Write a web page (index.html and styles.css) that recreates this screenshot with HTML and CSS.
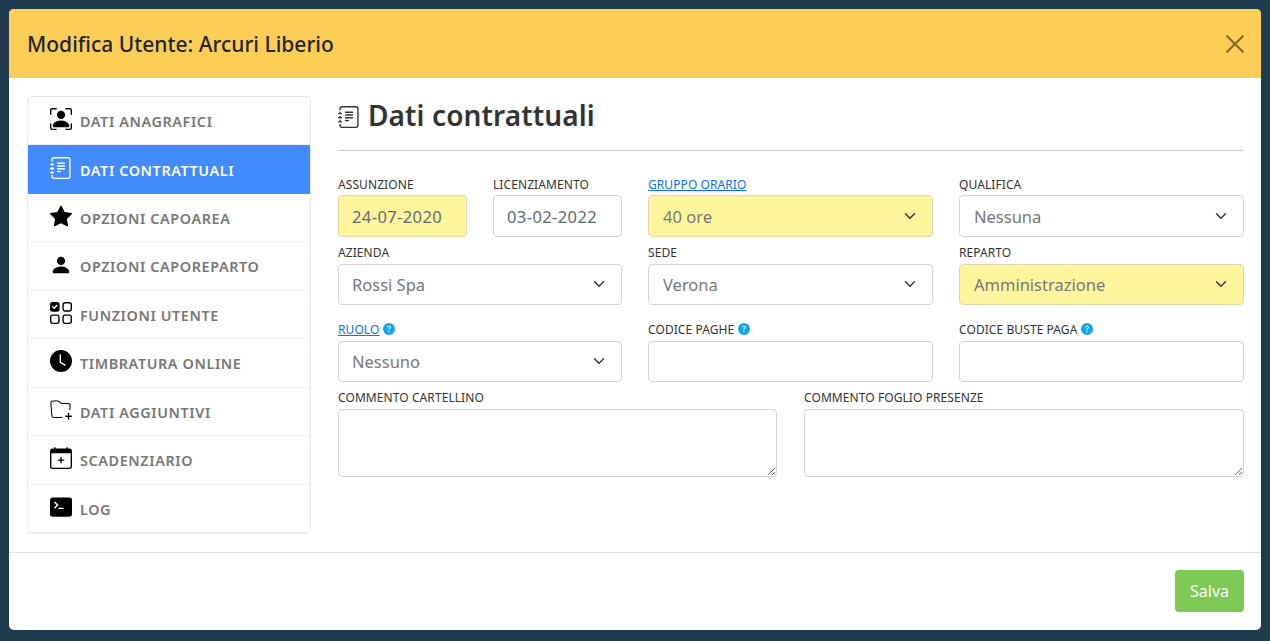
FILE: index.html
```html
<!DOCTYPE html>
<html lang="it">
<head>
<meta charset="utf-8">
<title>Modifica Utente</title>
<link rel="stylesheet" href="styles.css">
</head>
<body>
<div class="modal">
  <header class="modal-header">
    <h5 class="modal-title">Modifica Utente: Arcuri Liberio</h5>
    <button class="close" aria-label="Chiudi"><svg viewBox="0 0 18 18" width="18" height="18"><path d="M0.5 0.5L17.5 17.5M17.5 0.5L0.5 17.5"/></svg></button>
  </header>
  <div class="modal-body">
    <nav class="side">
      <a class="item"><svg class="ico" viewBox="0 0 16 16"><path d="M1.5 1a.5.5 0 0 0-.5.5v3a.5.5 0 0 1-1 0v-3A1.5 1.5 0 0 1 1.5 0h3a.5.5 0 0 1 0 1h-3zM11 .5a.5.5 0 0 1 .5-.5h3A1.5 1.5 0 0 1 16 1.5v3a.5.5 0 0 1-1 0v-3a.5.5 0 0 0-.5-.5h-3a.5.5 0 0 1-.5-.5zM.5 11a.5.5 0 0 1 .5.5v3a.5.5 0 0 0 .5.5h3a.5.5 0 0 1 0 1h-3A1.5 1.5 0 0 1 0 14.5v-3a.5.5 0 0 1 .5-.5zm15 0a.5.5 0 0 1 .5.5v3a1.5 1.5 0 0 1-1.5 1.5h-3a.5.5 0 0 1 0-1h3a.5.5 0 0 0 .5-.5v-3a.5.5 0 0 1 .5-.5z"/><path d="M3 14s-1 0-1-1 1-4 6-4 6 3 6 4-1 1-1 1H3zm8-9a3 3 0 1 1-6 0 3 3 0 0 1 6 0z"/></svg><span>DATI ANAGRAFICI</span></a>
      <a class="item active"><svg class="ico" viewBox="0 0 16 16"><path d="M5 10.5a.5.5 0 0 1 .5-.5h2a.5.5 0 0 1 0 1h-2a.5.5 0 0 1-.5-.5zm0-2a.5.5 0 0 1 .5-.5h5a.5.5 0 0 1 0 1h-5a.5.5 0 0 1-.5-.5zm0-2a.5.5 0 0 1 .5-.5h5a.5.5 0 0 1 0 1h-5a.5.5 0 0 1-.5-.5zm0-2a.5.5 0 0 1 .5-.5h5a.5.5 0 0 1 0 1h-5a.5.5 0 0 1-.5-.5z"/><path d="M3 0h10a2 2 0 0 1 2 2v12a2 2 0 0 1-2 2H3a2 2 0 0 1-2-2v-1h1v1a1 1 0 0 0 1 1h10a1 1 0 0 0 1-1V2a1 1 0 0 0-1-1H3a1 1 0 0 0-1 1v1H1V2a2 2 0 0 1 2-2z"/><path d="M1 5v-.5a.5.5 0 0 1 1 0V5h.5a.5.5 0 0 1 0 1h-2a.5.5 0 0 1 0-1H1zm0 3v-.5a.5.5 0 0 1 1 0V8h.5a.5.5 0 0 1 0 1h-2a.5.5 0 0 1 0-1H1zm0 3v-.5a.5.5 0 0 1 1 0v.5h.5a.5.5 0 0 1 0 1h-2a.5.5 0 0 1 0-1H1z"/></svg><span>DATI CONTRATTUALI</span></a>
      <a class="item"><svg class="ico" viewBox="0 0 16 16"><path d="M3.612 15.443c-.386.198-.824-.149-.746-.592l.83-4.73L.173 6.765c-.329-.314-.158-.888.283-.95l4.898-.696L7.538.792c.197-.39.73-.39.927 0l2.184 4.327 4.898.696c.441.062.612.636.282.95l-3.522 3.356.83 4.73c.078.443-.36.79-.746.592L8 13.187l-4.389 2.256z"/></svg><span>OPZIONI CAPOAREA</span></a>
      <a class="item"><svg class="ico" viewBox="0 0 16 16"><path d="M3 14s-1 0-1-1 1-4 6-4 6 3 6 4-1 1-1 1H3zm5-6a3 3 0 1 0 0-6 3 3 0 0 0 0 6z"/></svg><span>OPZIONI CAPOREPARTO</span></a>
      <a class="item"><svg class="ico" viewBox="0 0 16 16"><path d="M2 10h3a1 1 0 0 1 1 1v3a1 1 0 0 1-1 1H2a1 1 0 0 1-1-1v-3a1 1 0 0 1 1-1zm9-9h3a1 1 0 0 1 1 1v3a1 1 0 0 1-1 1h-3a1 1 0 0 1-1-1V2a1 1 0 0 1 1-1zm0 9a1 1 0 0 0-1 1v3a1 1 0 0 0 1 1h3a1 1 0 0 0 1-1v-3a1 1 0 0 0-1-1h-3zm0-10a2 2 0 0 0-2 2v3a2 2 0 0 0 2 2h3a2 2 0 0 0 2-2V2a2 2 0 0 0-2-2h-3zM2 9a2 2 0 0 0-2 2v3a2 2 0 0 0 2 2h3a2 2 0 0 0 2-2v-3a2 2 0 0 0-2-2H2zm7 2a2 2 0 0 1 2-2h3a2 2 0 0 1 2 2v3a2 2 0 0 1-2 2h-3a2 2 0 0 1-2-2v-3zM0 2a2 2 0 0 1 2-2h3a2 2 0 0 1 2 2v3a2 2 0 0 1-2 2H2a2 2 0 0 1-2-2V2zm5.354.854a.5.5 0 1 0-.708-.708L3 3.793l-.646-.647a.5.5 0 1 0-.708.708l1 1a.5.5 0 0 0 .708 0l2-2z" fill-rule="evenodd"/></svg><span>FUNZIONI UTENTE</span></a>
      <a class="item"><svg class="ico" viewBox="0 0 16 16"><path d="M16 8A8 8 0 1 1 0 8a8 8 0 0 1 16 0zM8 3.5a.5.5 0 0 0-1 0V9a.5.5 0 0 0 .252.434l3.5 2a.5.5 0 0 0 .496-.868L8 8.71V3.5z"/></svg><span>TIMBRATURA ONLINE</span></a>
      <a class="item"><svg class="ico" viewBox="0 0 16 16"><path class="thin" d="M9 13.5H2.8a1.4 1.4 0 0 1-1.4-1.3L.7 4.5V2.9A1.4 1.4 0 0 1 2.1 1.5h3.6a1.5 1.5 0 0 1 1 .4l1 1a1.5 1.5 0 0 0 1 .4h4.6a1.4 1.4 0 0 1 1.4 1.5l-.3 3.2"/><path d="M13.5 10a.5.5 0 0 1 .5.5V12h1.5a.5.5 0 1 1 0 1H14v1.5a.5.5 0 1 1-1 0V13h-1.5a.5.5 0 0 1 0-1H13v-1.5a.5.5 0 0 1 .5-.5z"/></svg><span>DATI AGGIUNTIVI</span></a>
      <a class="item"><svg class="ico" viewBox="0 0 16 16"><path d="M8 7a.5.5 0 0 1 .5.5V9H10a.5.5 0 0 1 0 1H8.5v1.5a.5.5 0 0 1-1 0V10H6a.5.5 0 0 1 0-1h1.5V7.5A.5.5 0 0 1 8 7z"/><path d="M3.5 0a.5.5 0 0 1 .5.5V1h8V.5a.5.5 0 0 1 1 0V1h1a2 2 0 0 1 2 2v11a2 2 0 0 1-2 2H2a2 2 0 0 1-2-2V3a2 2 0 0 1 2-2h1V.5a.5.5 0 0 1 .5-.5zM15 4.5H1V14a1 1 0 0 0 1 1h12a1 1 0 0 0 1-1V4.500z" fill-rule="evenodd"/></svg><span>SCADENZIARIO</span></a>
      <a class="item"><svg class="ico" viewBox="0 0 16 16"><path d="M0 3a2 2 0 0 1 2-2h12a2 2 0 0 1 2 2v10a2 2 0 0 1-2 2H2a2 2 0 0 1-2-2V3zm9.500 5.500h-3a.5.5 0 0 0 0 1h3a.5.5 0 0 0 0-1zm-6.354-.354a.5.5 0 1 0 .708.708l2-2a.5.5 0 0 0 0-.708l-2-2a.5.5 0 1 0-.708.708L4.793 6.500 3.146 8.146z"/></svg><span>LOG</span></a>
    </nav>
    <main class="content">
      <h2 class="page-title"><svg class="title-ico" viewBox="0 0 16 16"><path d="M5 10.5a.5.5 0 0 1 .5-.5h2a.5.5 0 0 1 0 1h-2a.5.5 0 0 1-.5-.5zm0-2a.5.5 0 0 1 .5-.5h5a.5.5 0 0 1 0 1h-5a.5.5 0 0 1-.5-.5zm0-2a.5.5 0 0 1 .5-.5h5a.5.5 0 0 1 0 1h-5a.5.5 0 0 1-.5-.5zm0-2a.5.5 0 0 1 .5-.5h5a.5.5 0 0 1 0 1h-5a.5.5 0 0 1-.5-.5z"/><path d="M3 0h10a2 2 0 0 1 2 2v12a2 2 0 0 1-2 2H3a2 2 0 0 1-2-2v-1h1v1a1 1 0 0 0 1 1h10a1 1 0 0 0 1-1V2a1 1 0 0 0-1-1H3a1 1 0 0 0-1 1v1H1V2a2 2 0 0 1 2-2z"/><path d="M1 5v-.5a.5.5 0 0 1 1 0V5h.5a.5.5 0 0 1 0 1h-2a.5.5 0 0 1 0-1H1zm0 3v-.5a.5.5 0 0 1 1 0V8h.5a.5.5 0 0 1 0 1h-2a.5.5 0 0 1 0-1H1zm0 3v-.5a.5.5 0 0 1 1 0v.5h.5a.5.5 0 0 1 0 1h-2a.5.5 0 0 1 0-1H1z"/></svg><span>Dati contrattuali</span></h2>
      <hr class="rule">
      <form class="form">
        <div class="row r1">
          <div class="f"><label>ASSUNZIONE</label><input class="ctl date hl" value="24-07-2020"></div>
          <div class="f"><label>LICENZIAMENTO</label><input class="ctl date" value="03-02-2022"></div>
          <div class="f"><label><a class="lnk">GRUPPO ORARIO</a></label><select class="ctl sel hl inset"><option>40 ore</option></select></div>
          <div class="f"><label>QUALIFICA</label><select class="ctl sel inset"><option>Nessuna</option></select></div>
        </div>
        <div class="row r2">
          <div class="f"><label>AZIENDA</label><select class="ctl sel"><option>Rossi Spa</option></select></div>
          <div class="f"><label>SEDE</label><select class="ctl sel inset"><option>Verona</option></select></div>
          <div class="f"><label>REPARTO</label><select class="ctl sel hl inset"><option>Amministrazione</option></select></div>
        </div>
        <div class="row r3">
          <div class="f"><label><a class="lnk">RUOLO</a><svg class="help" viewBox="0 0 16 16"><path d="M16 8A8 8 0 1 1 0 8a8 8 0 0 1 16 0zM5.496 6.033h.825c.138 0 .248-.113.266-.25.09-.656.54-1.134 1.342-1.134.686 0 1.314.343 1.314 1.168 0 .635-.374.927-.965 1.371-.673.489-1.206 1.06-1.168 1.987l.003.217a.25.25 0 0 0 .25.246h.811a.25.25 0 0 0 .25-.25v-.105c0-.718.273-.927 1.01-1.486.609-.463 1.244-.977 1.244-2.056 0-1.511-1.276-2.241-2.673-2.241-1.267 0-2.655.59-2.75 2.286a.237.237 0 0 0 .241.247zm2.325 6.443c.61 0 1.029-.394 1.029-.927 0-.552-.42-.94-1.029-.94-.584 0-1.009.388-1.009.94 0 .533.425.927 1.01.927z"/></svg></label><select class="ctl sel"><option>Nessuno</option></select></div>
          <div class="f"><label>CODICE PAGHE<svg class="help" viewBox="0 0 16 16"><path d="M16 8A8 8 0 1 1 0 8a8 8 0 0 1 16 0zM5.496 6.033h.825c.138 0 .248-.113.266-.25.09-.656.54-1.134 1.342-1.134.686 0 1.314.343 1.314 1.168 0 .635-.374.927-.965 1.371-.673.489-1.206 1.06-1.168 1.987l.003.217a.25.25 0 0 0 .25.246h.811a.25.25 0 0 0 .25-.25v-.105c0-.718.273-.927 1.01-1.486.609-.463 1.244-.977 1.244-2.056 0-1.511-1.276-2.241-2.673-2.241-1.267 0-2.655.59-2.75 2.286a.237.237 0 0 0 .241.247zm2.325 6.443c.61 0 1.029-.394 1.029-.927 0-.552-.42-.94-1.029-.94-.584 0-1.009.388-1.009.94 0 .533.425.927 1.01.927z"/></svg></label><input class="ctl"></div>
          <div class="f"><label>CODICE BUSTE PAGA<svg class="help" viewBox="0 0 16 16"><path d="M16 8A8 8 0 1 1 0 8a8 8 0 0 1 16 0zM5.496 6.033h.825c.138 0 .248-.113.266-.25.09-.656.54-1.134 1.342-1.134.686 0 1.314.343 1.314 1.168 0 .635-.374.927-.965 1.371-.673.489-1.206 1.06-1.168 1.987l.003.217a.25.25 0 0 0 .25.246h.811a.25.25 0 0 0 .25-.25v-.105c0-.718.273-.927 1.01-1.486.609-.463 1.244-.977 1.244-2.056 0-1.511-1.276-2.241-2.673-2.241-1.267 0-2.655.59-2.75 2.286a.237.237 0 0 0 .241.247zm2.325 6.443c.61 0 1.029-.394 1.029-.927 0-.552-.42-.94-1.029-.94-.584 0-1.009.388-1.009.94 0 .533.425.927 1.01.927z"/></svg></label><input class="ctl"></div>
        </div>
        <div class="row r4">
          <div class="f"><label>COMMENTO CARTELLINO</label><textarea class="ctl area"></textarea></div>
          <div class="f"><label>COMMENTO FOGLIO PRESENZE</label><textarea class="ctl area"></textarea></div>
        </div>
      </form>
    </main>
  </div>
  <footer class="modal-footer"><button class="save">Salva</button></footer>
</div>
</body>
</html>
```
FILE: styles.css
```css
* { box-sizing: border-box; }
html, body { height: 100%; }
body { margin: 0; padding: 9px; background: #203b4e; font-family: "Noto Sans", sans-serif; color: #212529; overflow: hidden; }
.modal { width: 1252px; height: 621px; background: #fff; border-radius: 5px; overflow: hidden; display: flex; flex-direction: column; }
.modal-header { height: 69px; flex: none; background: #fdce56; display: flex; align-items: center; justify-content: space-between; padding: 0 17px 0 18px; }
.modal-title { margin: 0; font-size: 21px; font-weight: 500; line-height: 30px; color: #212529; }
.close { border: 0; background: none; padding: 0; width: 18px; height: 18px; display: block; }
.close svg { display: block; }
.close path { stroke: #000; stroke-opacity: .5; stroke-width: 2; fill: none; }
.modal-body { flex: 1; display: flex; padding: 18px 17px 0 18px; gap: 27px; }
.side { width: 284px; height: 436.900px; flex: none; border: 1px solid #e3e9f0; border-radius: 4px; display: flex; flex-direction: column; overflow: hidden; box-shadow: 0 1px 1px rgba(0,0,0,.05); }
.item { flex: 1; display: flex; align-items: center; padding-left: 22px; gap: 8px; border-bottom: 1px solid #edf0f3; color: #777; font-size: 14.400px; font-weight: 600; letter-spacing: .6px; }
.item:last-child { border-bottom: 0; }
.item span { margin-top: 1.700px; }
.ico { width: 22px; height: 22px; fill: #000; flex: none; margin-top: -3px; }
.thin { fill: none; stroke: #000; stroke-width: .75; }
.item.active { background: #428bff; color: #fff; border-bottom-color: #428bff; }
.item.active .ico { fill: #fff; }
.content { flex: 1; min-width: 0; }
.page-title { margin: 0; height: 38px; display: flex; align-items: center; gap: 8px; font-size: 28px; font-weight: 600; letter-spacing: .12px; color: #333; line-height: 38px; }
.title-ico { width: 22px; height: 22px; fill: #333; flex: none; margin-top: 3px; }
.rule { margin: 16px 0 24px; border: 0; border-top: 1px solid #ccc; }
.form { display: flex; flex-direction: column; }
.row { display: grid; }
.r1 { grid-template-columns: 129px 129px 285px 285px; column-gap: 26px; }
.r2 { grid-template-columns: 284px 285px 285px; column-gap: 26px; margin-top: 6.100px; }
.r3 { grid-template-columns: 284px 285px 285px; column-gap: 26px; margin-top: 14.500px; }
.r4 { grid-template-columns: 439px 440px; column-gap: 27px; margin-top: 5.900px; }
.f { display: flex; flex-direction: column; min-width: 0; }
.f label { font-size: 12px; letter-spacing: .08px; line-height: 19px; height: 21px; color: #333; display: flex; align-items: flex-start; gap: 4px; }
.r1 .f label { height: 20px; }
.help { width: 12px; height: 12px; fill: #0ea5ef; flex: none; margin-top: 3px; }
.lnk { color: #0d6efd; text-decoration: underline; }
.ctl { height: 41.500px; width: 100%; border: 1px solid #ced4da; border-radius: 4px; background-color: #fff; font-family: inherit; font-size: 16.500px; padding: 0 13px; color: #5f6a74; display: block; }
.r1 .ctl { padding-top: 1px; }
.date { letter-spacing: .4px; }
.hl { background-color: #fff59d; border-color: #d9d7ab; }
.sel { appearance: none; -webkit-appearance: none; color: #777; background-image: url("data:image/svg+xml,%3Csvg xmlns='http://www.w3.org/2000/svg' viewBox='0 0 16 16'%3E%3Cpath fill='none' stroke='%23343a40' stroke-linecap='round' stroke-linejoin='round' stroke-width='2' d='M2 5l6 6 6-6'/%3E%3C/svg%3E"); background-repeat: no-repeat; background-position: right 14px center; background-size: 16px 12px; }
.sel.inset { padding-left: 14px; }
.area { height: 68px; padding: 8px 13px; }
.modal-footer { height: 78px; flex: none; border-top: 1px solid #e1e1e1; display: flex; justify-content: flex-end; align-items: flex-start; padding: 17px 17px 0 0; }
.save { width: 69px; height: 42px; background: #7ec855; border: 0; border-radius: 4px; color: #fff; font-family: inherit; font-size: 16px; }
```
